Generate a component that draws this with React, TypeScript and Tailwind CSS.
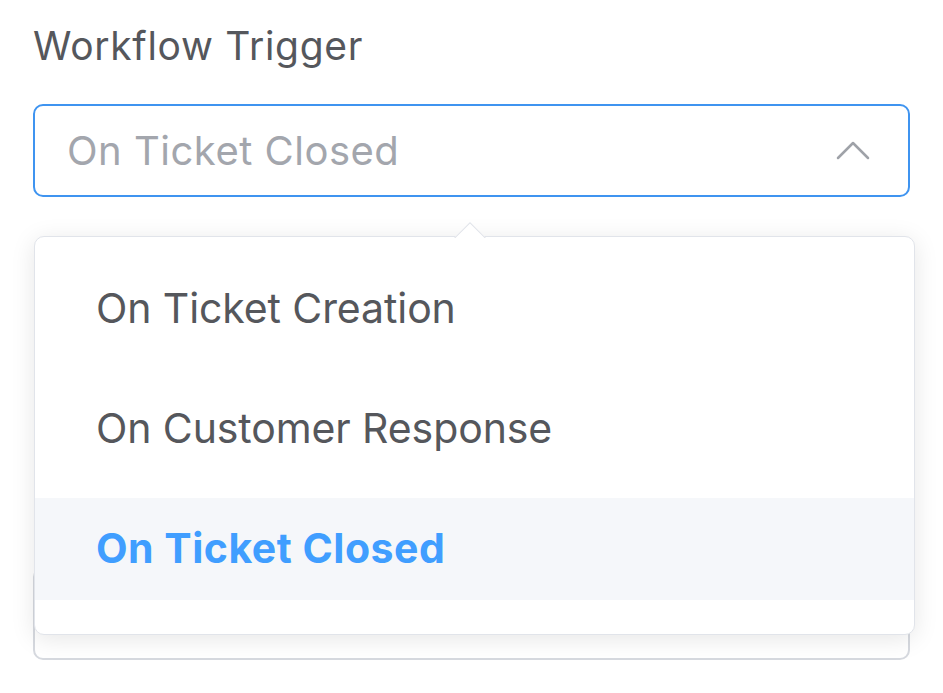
import React from "react";

const options = [
  { label: "On Ticket Creation", selected: false },
  { label: "On Customer Response", selected: false },
  { label: "On Ticket Closed", selected: true },
];

export default function App() {
  const font = { fontFamily: "Inter, 'Noto Sans', sans-serif" };
  return (
    <div className="relative w-[943px] h-[693px] overflow-hidden bg-white" style={font}>
      <div className="pl-[33px] pr-[33px] pt-[22px] flex flex-col">
        <div className="text-[39px] leading-[48px] text-[#55575c] tracking-[0.7px]">Workflow Trigger</div>
        <div className="mt-[34px] h-[93px] rounded-[10px] border-[2.5px] border-[#3f94f0] flex items-center justify-between pl-[32px] pr-[38px]">
          <span className="text-[40px] text-[#a3a6ad] tracking-[0.5px]">On Ticket Closed</span>
          <svg width="34" height="20" viewBox="0 0 34 20" fill="none">
            <path d="M2 17 L17 2 L32 17" stroke="#9fa2a8" strokeWidth="2.5" strokeLinecap="round" strokeLinejoin="round" />
          </svg>
        </div>
        <div className="mt-[370px] h-[93px] rounded-[10px] border-[2px] border-[#d6d9df]" />
      </div>

      <div className="absolute left-[34px] top-[236px] w-[881px] h-[399px]">
        <div className="h-full rounded-[10px] border border-[#e1e4ea] bg-white shadow-[0_4px_24px_rgba(0,0,0,0.10)] pt-[21px] flex flex-col gap-[18px]">
          {options.map((o) => (
            <div
              key={o.label}
              className={
                o.selected
                  ? "h-[102px] flex items-center pl-[61px] text-[41px] font-bold text-[#409eff] bg-[#f5f7fa] tracking-[0.5px]"
                  : "h-[102px] flex items-center pl-[61px] text-[41px] text-[#55575c] tracking-[-0.1px]"
              }
            >
              {o.label}
            </div>
          ))}
        </div>
        <div className="absolute left-[420px] top-[-16px] w-[32px] h-[18px] overflow-hidden">
          <div className="absolute left-[4px] top-[7px] w-[24px] h-[24px] rotate-45 bg-white border border-[#e1e4ea]" />
        </div>
      </div>
    </div>
  );
}
